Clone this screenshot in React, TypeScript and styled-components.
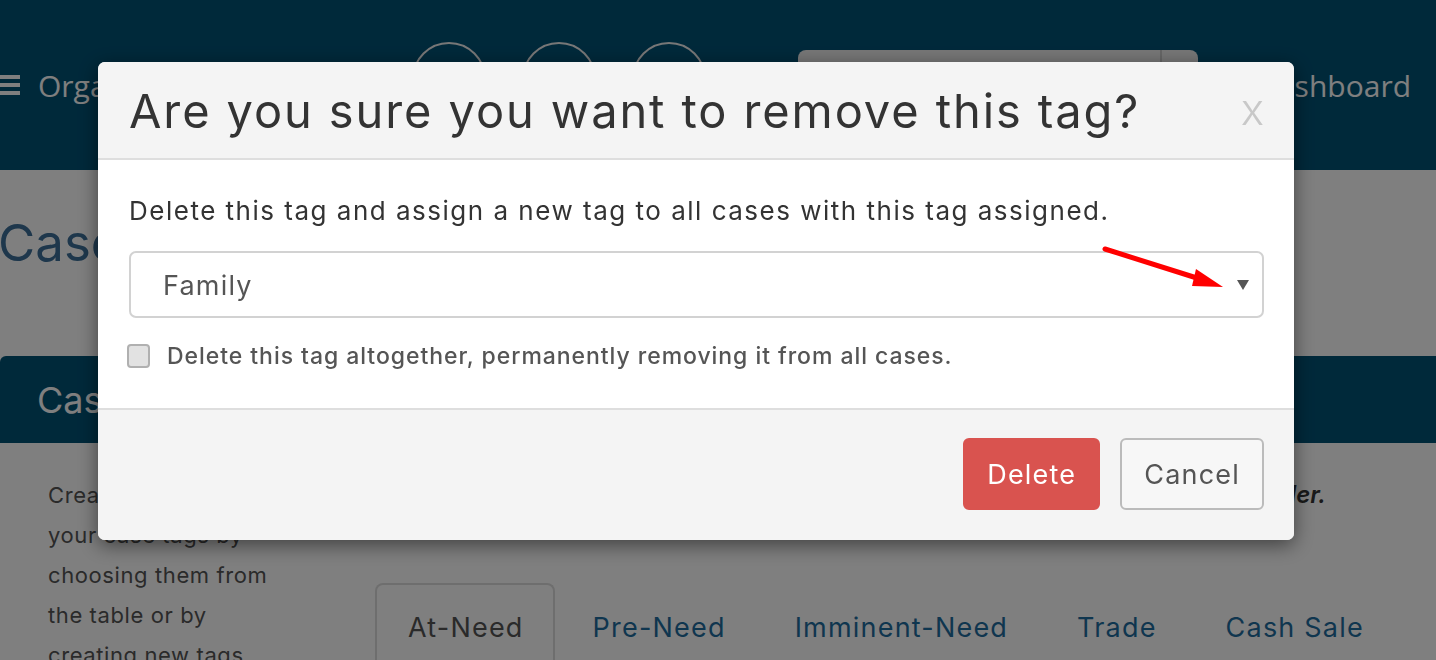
import React from "react";
import styled, { createGlobalStyle } from "styled-components";

const GlobalStyle = createGlobalStyle`
  html, body {
    margin: 0;
    padding: 0;
    background: #fff;
    font-family: Inter, "Open Sans", sans-serif;
    overflow: hidden;
  }
`;

const Page = styled.div`
  width: 1436px;
  height: 660px;
  overflow: hidden;
`;

const NavBar = styled.header`
  height: 170px;
  background: #005275;
  display: flex;
  align-items: center;
  padding: 0 25px 0 0;
  box-sizing: border-box;
  font-family: "Open Sans", sans-serif;
  color: #fff;
`;

const Brand = styled.div`
  display: flex;
  align-items: center;
  gap: 18px;
  font-size: 30px;
  width: 412px;
  flex-shrink: 0;
`;

const Burger = styled.span`
  display: flex;
  flex-direction: column;
  gap: 4px;
  & > i {
    display: block;
    width: 20px;
    height: 4px;
    background: #fff;
  }
`;

const Circles = styled.div`
  display: flex;
  gap: 36px;
  margin-bottom: 12px;
`;

const Circle = styled.span`
  width: 70px;
  height: 70px;
  border: 2px solid #eee;
  border-radius: 50%;
`;

const Search = styled.div`
  margin: 0 0 12px 92px;
  width: 400px;
  height: 58px;
  border-radius: 8px;
  background: #eee;
  display: flex;
  justify-content: flex-end;
  & > span {
    width: 36px;
    border-left: 2px solid #ccc;
  }
`;

const NavLink = styled.div`
  margin-left: auto;
  font-size: 30px;
`;

const PageTitle = styled.h1`
  margin: 0 0 0 -2px;
  height: 186px;
  box-sizing: border-box;
  padding-top: 42px;
  font-weight: 400;
  font-size: 51px;
  color: #3c6f98;
`;

const PanelHead = styled.div`
  height: 87px;
  background: #005275;
  border-radius: 6px 0 0 0;
  color: #fff;
  font-size: 36px;
  display: flex;
  align-items: center;
  padding-left: 37px;
`;

const PanelBody = styled.div`
  display: flex;
  padding: 32px 0 0 48px;
`;

const Intro = styled.p`
  margin: 0;
  width: 250px;
  font-size: 22px;
  line-height: 40px;
  letter-spacing: 0.6px;
  color: #555;
`;

const Main = styled.div`
  margin-left: 77px;
  flex: 1;
`;

const Hint = styled.p`
  margin: 0 110px 0 0;
  text-align: right;
  font-size: 24px;
  line-height: 40px;
  font-style: italic;
  font-weight: 600;
  color: #333;
`;

const Tabs = styled.div`
  display: flex;
  margin-top: 68px;
`;

const Tab = styled.div<{ $active?: boolean }>`
  padding: 26px 29px 30px 31px;
  font-size: 27px;
  letter-spacing: 1.2px;
  color: ${(p) => (p.$active ? "#555" : "#1f6c9e")};
  border: 2px solid ${(p) => (p.$active ? "#ddd" : "transparent")};
  border-bottom: none;
  border-radius: 8px 8px 0 0;
  margin-right: 5px;
`;

const Backdrop = styled.div`
  position: fixed;
  inset: 0;
  background: rgba(0, 0, 0, 0.5);
  padding: 62px 0 0 98px;
`;

const Modal = styled.div`
  width: 1196px;
  border-radius: 7px;
  overflow: hidden;
  background: #fff;
  box-shadow: 0 5px 20px rgba(0, 0, 0, 0.5);
`;

const ModalHeader = styled.div`
  height: 96px;
  background: #f4f4f4;
  border-bottom: 2px solid #dedede;
  display: flex;
  align-items: center;
  padding: 0 30px 0 31px;
`;

const ModalTitle = styled.h2`
  margin: 0;
  flex: 1;
  font-weight: 400;
  font-size: 47px;
  color: #333;
  letter-spacing: 1.9px;
`;

const Close = styled.span`
  font-size: 44px;
  color: #c8c8c8;
  font-weight: 300;
  margin-top: -2px;
`;

const ModalBody = styled.div`
  height: 250px;
  box-sizing: border-box;
  padding: 35px 30px 0 31px;
  border-bottom: 2px solid #dedede;
`;

const Lead = styled.p`
  margin: 0;
  font-size: 26px;
  line-height: 32px;
  letter-spacing: 1.5px;
  color: #333;
`;

const SelectWrap = styled.div`
  position: relative;
  margin-top: 24px;
  height: 67px;
  box-sizing: border-box;
  border: 2px solid #d2d2d2;
  border-radius: 7px;
  display: flex;
  align-items: center;
  padding: 0 13px 0 32px;
`;

const SelectValue = styled.span`
  flex: 1;
  font-size: 27px;
  letter-spacing: 1.2px;
  color: #555;
  margin-top: 2px;
`;

const Caret = styled.span`
  width: 0;
  height: 0;
  border-left: 6px solid transparent;
  border-right: 6px solid transparent;
  border-top: 10px solid #555;
`;

const Annotation = styled.svg`
  position: absolute;
  left: 961px;
  top: -13px;
`;

const CheckRow = styled.label`
  display: flex;
  align-items: center;
  gap: 17px;
  margin-top: 24px;
  font-size: 23px;
  letter-spacing: 0.95px;
  font-weight: 500;
  color: #555;
`;

const Box = styled.span`
  width: 23px;
  height: 24px;
  flex-shrink: 0;
  box-sizing: border-box;
  border: 2px solid #b0b0b0;
  border-radius: 4px;
  background: #e2e2e2;
  margin-left: -2px;
`;

const ModalFooter = styled.div`
  height: 130px;
  background: #f4f4f4;
  display: flex;
  justify-content: flex-end;
  align-items: flex-start;
  gap: 20px;
  padding: 28px 30px 0 0;
  box-sizing: border-box;
`;

const Button = styled.button<{ $danger?: boolean }>`
  height: 72px;
  padding: 0 22px;
  border-radius: 6px;
  font-family: Inter, sans-serif;
  font-size: 27px;
  letter-spacing: 1.2px;
  cursor: pointer;
  background: ${(p) => (p.$danger ? "#d9534f" : "#f7f7f7")};
  color: ${(p) => (p.$danger ? "#fff" : "#555")};
  border: 2px solid ${(p) => (p.$danger ? "#d9534f" : "#bbb")};
`;

export default function App() {
  return (
    <Page>
      <GlobalStyle />
      <NavBar>
        <Brand>
          <Burger>
            <i />
            <i />
            <i />
          </Burger>
          Organization
        </Brand>
        <Circles>
          <Circle />
          <Circle />
          <Circle />
        </Circles>
        <Search>
          <span />
        </Search>
        <NavLink>Dashboard</NavLink>
      </NavBar>
      <PageTitle>Case Tags</PageTitle>
      <PanelHead>Case Tags</PanelHead>
      <PanelBody>
        <Intro>
          Create and organize your case tags by choosing them from the table or by creating new tags
        </Intro>
        <Main>
          <Hint>Drag tags to change their order.</Hint>
          <Tabs>
            <Tab $active>At-Need</Tab>
            <Tab>Pre-Need</Tab>
            <Tab>Imminent-Need</Tab>
            <Tab>Trade</Tab>
            <Tab>Cash Sale</Tab>
          </Tabs>
        </Main>
      </PanelBody>

      <Backdrop>
        <Modal>
          <ModalHeader>
            <ModalTitle>Are you sure you want to remove this tag?</ModalTitle>
            <Close>x</Close>
          </ModalHeader>
          <ModalBody>
            <Lead>Delete this tag and assign a new tag to all cases with this tag assigned.</Lead>
            <SelectWrap>
              <SelectValue>Family</SelectValue>
              <Caret />
              <Annotation width="140" height="60" viewBox="0 0 140 60">
                <line x1="13" y1="9" x2="108" y2="39" stroke="#f00" strokeWidth="5" strokeLinecap="round" />
                <polygon points="104,29 131,47 100,46" fill="#f00" />
              </Annotation>
            </SelectWrap>
            <CheckRow>
              <Box />
              Delete this tag altogether, permanently removing it from all cases.
            </CheckRow>
          </ModalBody>
          <ModalFooter>
            <Button $danger>Delete</Button>
            <Button>Cancel</Button>
          </ModalFooter>
        </Modal>
      </Backdrop>
    </Page>
  );
}
